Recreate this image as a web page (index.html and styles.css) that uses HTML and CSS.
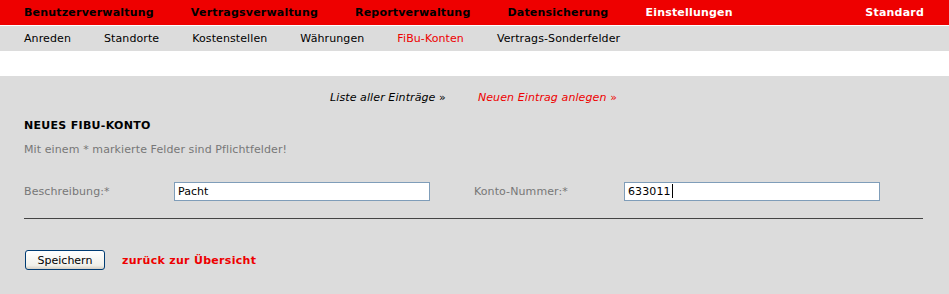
FILE: index.html
```html
<!DOCTYPE html>
<html lang="de">
<head>
<meta charset="utf-8">
<title>Neues FiBu-Konto</title>
<link rel="stylesheet" href="styles.css">
</head>
<body>
<div class="topnav">
  <a class="top-item">Benutzerverwaltung</a>
  <a class="top-item">Vertragsverwaltung</a>
  <a class="top-item">Reportverwaltung</a>
  <a class="top-item">Datensicherung</a>
  <a class="top-item active">Einstellungen</a>
  <a class="top-item right">Standard</a>
</div>
<div class="subnav">
  <a class="sub-item">Anreden</a>
  <a class="sub-item">Standorte</a>
  <a class="sub-item">Kostenstellen</a>
  <a class="sub-item">Währungen</a>
  <a class="sub-item active">FiBu-Konten</a>
  <a class="sub-item">Vertrags-Sonderfelder</a>
</div>
<div class="spacer"></div>
<div class="content">
  <div class="actions">
    <span class="action"><a class="action-link">Liste aller Einträge</a> <span class="raquo">»</span></span>
    <span class="action red"><a class="action-link">Neuen Eintrag anlegen</a> <span class="raquo">»</span></span>
  </div>
  <h1 class="title">NEUES FIBU-KONTO</h1>
  <p class="note">Mit einem * markierte Felder sind Pflichtfelder!</p>
  <div class="form-row">
    <label class="label">Beschreibung:*</label>
    <div class="field"><input class="input" type="text" value="Pacht"></div>
    <label class="label">Konto-Nummer:*</label>
    <div class="field"><span class="input fake">633011<span class="caret"></span></span></div>
  </div>
  <div class="rule"></div>
  <div class="buttons">
    <button class="btn" type="button">Speichern</button>
    <a class="back">zurück zur Übersicht</a>
  </div>
</div>
</body>
</html>
```
FILE: styles.css
```css
html, body {
  margin: 0;
  padding: 0;
}
body {
  font-family: "DejaVu Sans", Verdana, sans-serif;
  font-size: 11px;
  background: #dcdcdc;
  color: #000;
  letter-spacing: 0.1px;
}
a {
  cursor: pointer;
}
.topnav {
  display: flex;
  align-items: center;
  height: 25px;
  background: #ee0000;
  border-bottom: 1px solid #ffffff;
  padding: 0 25px 0 24px;
  gap: 37px;
}
.top-item {
  font-weight: bold;
  font-size: 11px;
  color: #000;
  line-height: 25px;
  letter-spacing: 0.2px;
}
.top-item.active {
  color: #fff;
}
.top-item.right {
  margin-left: auto;
  color: #fff;
}
.subnav {
  display: flex;
  align-items: center;
  height: 25px;
  background: #dcdcdc;
  padding: 0 24px;
  gap: 33px;
}
.sub-item {
  color: #000;
  line-height: 25px;
  letter-spacing: 0.1px;
}
.sub-item.active {
  color: #ee0000;
}
.spacer {
  height: 25px;
  background: #fff;
}
.content {
  background: #dcdcdc;
  padding: 13px 26px 24px 24px;
}
.actions {
  display: flex;
  justify-content: center;
  gap: 32px;
  height: 18px;
  line-height: 18px;
}
.action {
  color: #000;
}
.action-link {
  font-style: italic;
}
.action.red {
  color: #ee0000;
}
.title {
  margin: 11px 0 0;
  font-size: 11px;
  font-weight: bold;
  line-height: 16px;
  letter-spacing: 0.3px;
}
.note {
  margin: 8px 0 0;
  color: #777;
  line-height: 16px;
}
.form-row {
  display: grid;
  grid-template-columns: 150px 300px 150px 1fr;
  align-items: center;
  margin-top: 23px;
  height: 20px;
}
.label {
  color: #777;
}
.input {
  box-sizing: border-box;
  display: block;
  width: 256px;
  height: 19px;
  border: 1px solid #7f9db9;
  background: #fff;
  font-family: "DejaVu Sans", Verdana, sans-serif;
  font-size: 11px;
  padding: 0 3px;
  margin: 0;
  color: #000;
  outline: none;
}
.input.fake {
  display: flex;
  align-items: center;
}
.caret {
  display: inline-block;
  width: 1px;
  height: 14px;
  background: #000;
  margin-left: 1px;
}
.rule {
  height: 1px;
  background: #444;
  margin-top: 17px;
}
.buttons {
  display: flex;
  align-items: center;
  gap: 17px;
  margin-top: 31px;
  padding-left: 1px;
}
.btn {
  box-sizing: border-box;
  width: 80px;
  height: 20px;
  border: 1px solid #003c74;
  border-radius: 3px;
  background: linear-gradient(#ffffff, #f0f0ea 80%, #d6d0c5);
  font-family: "DejaVu Sans", Verdana, sans-serif;
  font-size: 11px;
  color: #000;
  padding: 0;
}
.back {
  color: #ee0000;
  font-weight: bold;
  letter-spacing: 0.3px;
}
```
